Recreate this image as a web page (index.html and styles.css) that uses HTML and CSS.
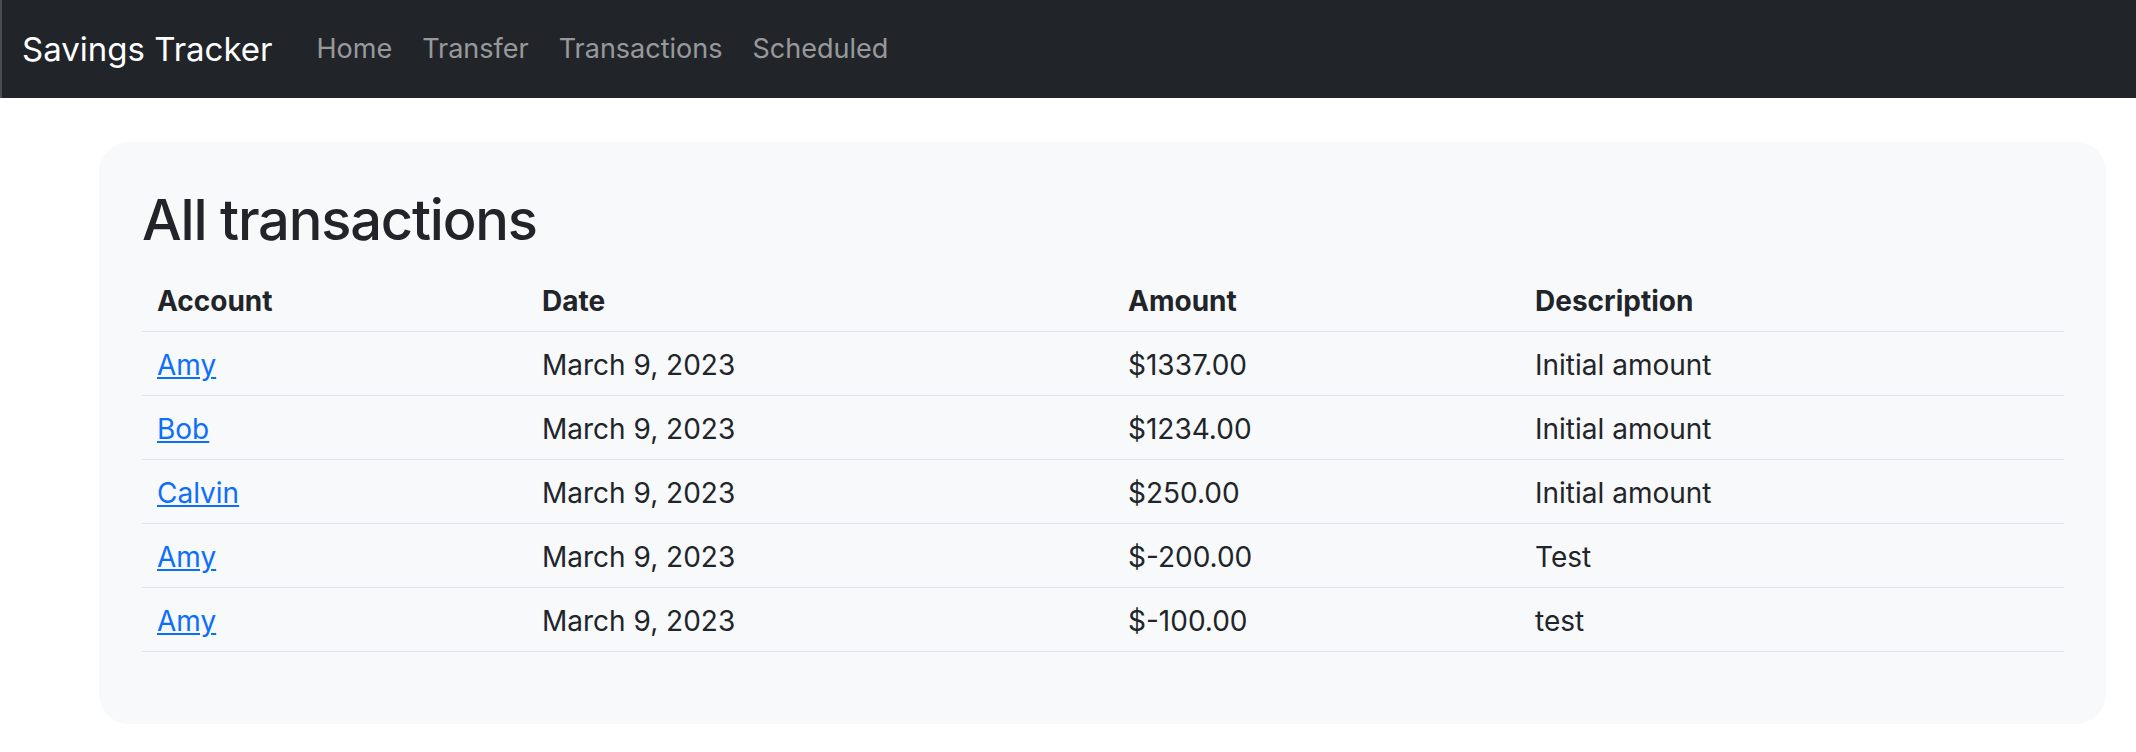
FILE: index.html
```html
<!DOCTYPE html>
<html lang="en">
<head>
<meta charset="utf-8">
<title>Savings Tracker</title>
<link rel="stylesheet" href="styles.css">
</head>
<body>
<nav class="navbar">
  <a class="brand" href="#">Savings Tracker</a>
  <ul class="nav">
    <li><a class="nav-link" href="#">Home</a></li>
    <li><a class="nav-link" href="#">Transfer</a></li>
    <li><a class="nav-link" href="#">Transactions</a></li>
    <li><a class="nav-link" href="#">Scheduled</a></li>
  </ul>
</nav>
<main class="main">
  <section class="card">
    <h1 class="title">All transactions</h1>
    <table class="table">
      <colgroup>
        <col class="c-account">
        <col class="c-date">
        <col class="c-amount">
        <col class="c-desc">
      </colgroup>
      <thead>
        <tr><th>Account</th><th>Date</th><th>Amount</th><th>Description</th></tr>
      </thead>
      <tbody>
        <tr><td><a href="#">Amy</a></td><td>March 9, 2023</td><td>$1337.00</td><td>Initial amount</td></tr>
        <tr><td><a href="#">Bob</a></td><td>March 9, 2023</td><td>$1234.00</td><td>Initial amount</td></tr>
        <tr><td><a href="#">Calvin</a></td><td>March 9, 2023</td><td>$250.00</td><td>Initial amount</td></tr>
        <tr><td><a href="#">Amy</a></td><td>March 9, 2023</td><td>$-200.00</td><td>Test</td></tr>
        <tr><td><a href="#">Amy</a></td><td>March 9, 2023</td><td>$-100.00</td><td>test</td></tr>
      </tbody>
    </table>
  </section>
</main>
</body>
</html>
```
FILE: styles.css
```css
* { box-sizing: border-box; }
html, body { margin: 0; padding: 0; }
body {
  font-family: Inter, "Noto Sans", "Liberation Sans", sans-serif;
  font-size: 28px;
  line-height: 39px;
  color: #212529;
  background: #fff;
}
.navbar {
  height: 98px;
  background: #212529;
  display: flex;
  align-items: center;
  padding-left: 20px;
  border-left: 2px solid #4a4d51;
}
.brand {
  color: #fff;
  text-decoration: none;
  font-size: 33px;
  line-height: 40px;
  margin-right: 29px;
}
.nav {
  list-style: none;
  margin: 0;
  padding: 0;
  display: flex;
}
.nav-link {
  display: block;
  padding: 0 15px;
  color: rgba(255,255,255,0.55);
  text-decoration: none;
  font-size: 27px;
  line-height: 40px;
}
.main {
  padding: 44px 30px 30px 99px;
}
.card {
  background: #f8f9fa;
  border-radius: 30px;
  padding: 45px 42px 45px 43px;
}
.title {
  margin: 0 0 14px;
  font-size: 56px;
  line-height: 67px;
  font-weight: 500;
  letter-spacing: -1.2px;
}
.table {
  width: 100%;
  border-collapse: collapse;
  margin-bottom: 27px;
  table-layout: fixed;
}
.c-account { width: 385px; }
.c-date { width: 586px; }
.c-amount { width: 407px; }
.c-desc { width: auto; }
.table th, .table td {
  text-align: left;
  padding: 14px 15px 10px;
  border-bottom: 1px solid #dee2e6;
  vertical-align: top;
}
.table th { font-weight: 700; }
.table a { color: #0d6efd; text-decoration: underline; }
```
